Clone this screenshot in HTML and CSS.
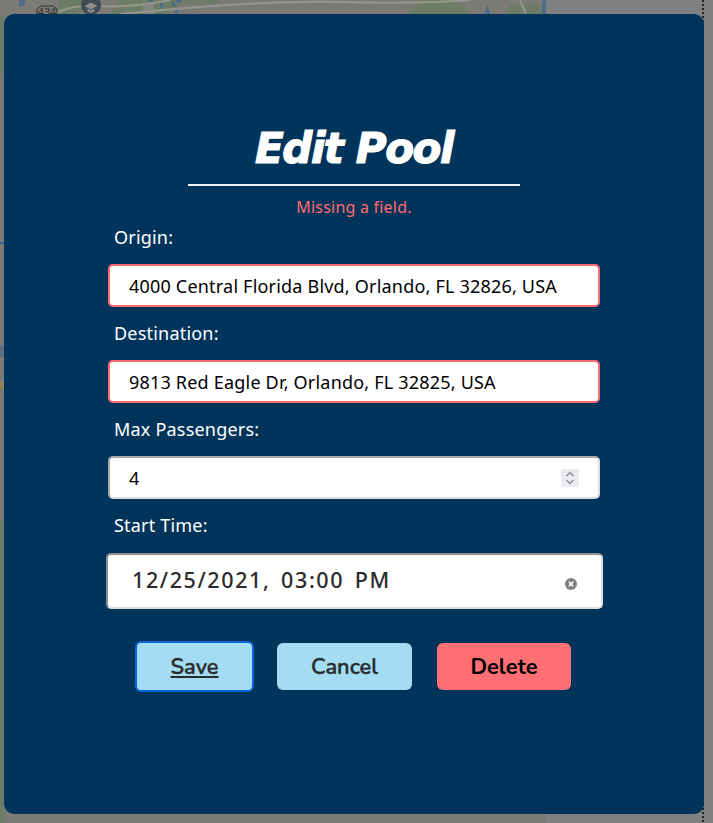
FILE: index.html
```html
<!DOCTYPE html>
<html lang="en">
<head>
<meta charset="utf-8">
<title>Edit Pool</title>
<link rel="stylesheet" href="styles.css">
</head>
<body>
<svg class="map" width="713" height="823" viewBox="0 0 713 823" aria-hidden="true">
  <rect x="0" y="0" width="546" height="823" fill="#7c7a75"/>
  <path d="M60 0h35l-20 14H55zM120 0h70l-25 14h-55zM420 0h40l8 14h-60zM510 4h32v10h-36zM0 14h4v60H0zM0 520h4v303H0zM190 0h30l-5 4h-30z" fill="#6c7c66"/>
  <path d="M19 0h6l-1 6h-5zM149 0h4v5h-4zM172 2h3v5h-3zM487 5l4 9h-6zM175 8h3v5h-3zM160 3h3v5h-3zM176 0h5v3h-5zM542 0h4v14h-4z" fill="#4f6b85"/>
  <rect x="0" y="345" width="4" height="12" fill="#5f6f80"/>
  <rect x="143" y="4" width="11" height="10" fill="#858581"/>
  <path d="M55 14Q70 4 100 6T170 0M120 14Q260 0 340 2T470 0M520 0l6 14" fill="none" stroke="#96968f" stroke-width="2"/>
  <rect x="0" y="242" width="4" height="2" fill="#3f5f96"/>
  <rect x="0" y="382" width="4" height="8" fill="#8f8258"/>
  <rect x="37" y="6" width="20" height="14" rx="5" fill="#7c7a75" stroke="#333" stroke-width="1"/>
  <text x="47" y="16" class="map-shield">434</text>
  <circle cx="91" cy="5" r="10" fill="#414b53"/>
  <path d="M84.500 6 91 2.500 97.500 6 91 9.500zM87.500 8.500v3l3.500 1.500 3.500-1.500v-3L91 10.500z" fill="#8d8d8d"/>
  <line x1="703" y1="0" x2="703" y2="823" stroke="#222" stroke-width="2" stroke-dasharray="2 2"/>
</svg>
<main class="modal">
  <h1 class="title">Edit Pool</h1>
  <hr class="rule">
  <p class="error">Missing a field.</p>
  <form class="form">
    <label class="field">
      <span class="label">Origin:</span>
      <input class="input input-invalid" type="text" value="4000 Central Florida Blvd, Orlando, FL 32826, USA">
    </label>
    <label class="field">
      <span class="label">Destination:</span>
      <input class="input input-invalid" type="text" value="9813 Red Eagle Dr, Orlando, FL 32825, USA">
    </label>
    <label class="field">
      <span class="label">Max Passengers:</span>
      <span class="input input-plain input-row">
        <input class="inner-input" type="text" value="4">
        <svg class="spinner" width="18" height="18" viewBox="0 0 18 18" aria-hidden="true">
          <rect width="18" height="18" fill="#ebebf0"/>
          <path d="M5.500 7 9 3.500 12.500 7M5.500 11 9 14.500 12.500 11" fill="none" stroke="#8d8d93" stroke-width="1.500"/>
        </svg>
      </span>
    </label>
    <label class="field field-date">
      <span class="label">Start Time:</span>
      <span class="date input-row">
        <span class="date-text">12/25/2021, 03:00 PM</span>
        <svg class="clear" width="12" height="12" viewBox="0 0 12 12" aria-hidden="true">
          <circle cx="6" cy="6" r="6" fill="#7f7f7f"/>
          <path d="M3.800 3.800 8.200 8.200M8.200 3.800 3.800 8.200" stroke="#fff" stroke-width="1.600"/>
        </svg>
      </span>
    </label>
    <div class="actions">
      <button class="btn btn-save" type="button">Save</button>
      <button class="btn btn-cancel" type="button">Cancel</button>
      <button class="btn btn-delete" type="button">Delete</button>
    </div>
  </form>
</main>
</body>
</html>
```

FILE: styles.css
```css
* { box-sizing: border-box; }
html, body { margin: 0; height: 100%; overflow: hidden; }
body { background: #808080; font-family: "Noto Sans", "Open Sans", sans-serif; position: relative; }
.map { position: absolute; left: 0; top: 0; }
.map-shield { font: 11px "Liberation Sans", sans-serif; fill: #333; text-anchor: middle; }
.modal {
  position: relative;
  width: 700px; height: 800px;
  margin: 14px 0 0 4px;
  padding-top: 105px;
  background: #00345a;
  border-radius: 10px;
  display: flex; flex-direction: column; align-items: center;
}
.title {
  margin: 0; height: 54px;
  color: #fff;
  font: italic 700 42px/60px "DejaVu Sans", sans-serif;
  letter-spacing: -1.400px;
  -webkit-text-stroke: 1.200px #fff;
}
.rule { width: 332px; height: 2px; margin: 11px 0 0; border: 0; background: #f2f2f2; }
.error { margin: 10px 0 0; height: 22px; color: #ff6b72; font-size: 16px; line-height: 22px; letter-spacing: .22px; }
.form { width: 492px; display: flex; flex-direction: column; margin-top: 6px; }
.field { display: flex; flex-direction: column; height: 96px; flex: none; }
.label { height: 40px; padding-left: 6px; color: #fff; font-size: 18px; line-height: 27px; letter-spacing: .2px; }
.input {
  display: block; width: 492px; height: 43px;
  padding: 0 19px;
  background: #fff; border: 2px solid #ff6b6f; border-radius: 5px;
  color: #000; font: 18px "Noto Sans", sans-serif; letter-spacing: .2px; outline: none;
}
.input-plain { border-color: #a9a9a9 #ddd #ddd #a9a9a9; }
.input-row { display: flex; align-items: center; justify-content: space-between; }
.inner-input { width: 300px; padding: 0; border: 0; outline: none; font: inherit; color: #000; background: transparent; }
.field-date { height: auto; }
.date {
  width: 497px; height: 56px; margin: 1px 0 0 -2px;
  padding: 0 24px;
  background: #fff; border: 2px solid; border-color: #8f8f8f #ddd #ddd #8f8f8f; border-radius: 5px;
}
.date-text { margin-bottom: 3px; color: #2b2b2b; font-family: "Noto Sans", sans-serif; font-weight: 500; font-size: 21.500px; letter-spacing: 1.600px; word-spacing: 3.500px; }
.clear { margin: 5px 0 0 0; }
.actions { display: flex; align-items: center; margin-top: 32px; padding-left: 27px; }
.btn {
  height: 47px; padding: 0; border: 0; border-radius: 6px;
  color: #2a2a2a; font: 600 21.800px "Nunito", "Lato", sans-serif; -webkit-text-stroke: .35px #2a2a2a; cursor: pointer;
}
.btn-save { width: 119px; height: 51px; background: #a3dcf3; border: 2px solid #0a63d8; text-decoration: underline; margin-right: 23px; }
.btn-cancel { width: 135px; background: #a3dcf3; margin-right: 25px; }
.btn-delete { width: 134px; background: #ff6f73; color: #000; font-weight: 700; -webkit-text-stroke: 0; }
```
